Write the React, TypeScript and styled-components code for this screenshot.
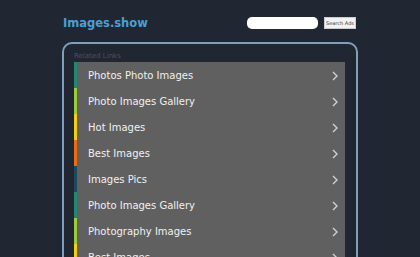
import React from "react";
import styled, { createGlobalStyle } from "styled-components";

const Global = createGlobalStyle`
  html, body {
    margin: 0;
    padding: 0;
    background: #212633;
    font-family: "DejaVu Sans", Verdana, sans-serif;
    overflow: hidden;
  }
`;

const Page = styled.div`
  width: 296px;
  margin: 0 auto;
  padding-top: 14px;
`;

const Header = styled.div`
  display: flex;
  align-items: center;
  justify-content: space-between;
  height: 18px;
  margin-bottom: 10px;
  padding: 0 2px 0 1px;
`;

const Logo = styled.div`
  color: #4b9fd2;
  font-size: 11.5px;
  font-weight: 700;
`;

const SearchForm = styled.div`
  display: flex;
  align-items: center;
  gap: 6px;
`;

const SearchInput = styled.input`
  width: 71px;
  height: 12px;
  box-sizing: border-box;
  border: none;
  border-radius: 5px;
  background: #fff;
  padding: 0 4px;
`;

const SearchButton = styled.button`
  height: 12px;
  width: 32px;
  box-sizing: border-box;
  padding: 0;
  border: 1px solid #ccc;
  background: #f2f2f2;
  color: #333;
  font-family: "DejaVu Sans", sans-serif;
  font-size: 5px;
  line-height: 10px;
`;

const Panel = styled.div`
  border: 2px solid #7f9fbd;
  border-radius: 10px;
  padding: 8px 11px 20px 10px;
  height: 260px;
`;

const PanelTitle = styled.div`
  color: #4a5262;
  font-size: 7px;
  height: 10px;
  line-height: 8px;
`;

const List = styled.ul`
  list-style: none;
  margin: 0;
  padding: 0;
  background: #606060;
`;

const Row = styled.li<{ $accent: string }>`
  display: flex;
  align-items: center;
  justify-content: space-between;
  height: 26px;
  border-left: 3px solid ${(p) => p.$accent};
  padding: 1px 7px 0 11px;
  box-sizing: border-box;
  color: #f0f0f0;
  font-size: 10px;
`;

const Chevron = () => (
  <svg width="6" height="10" viewBox="0 0 6 10">
    <path d="M1 1 L5 5 L1 9" fill="none" stroke="#d0d0d0" strokeWidth="1.4" />
  </svg>
);

const links = [
  ["Photos Photo Images", "#23876f"],
  ["Photo Images Gallery", "#9ccb3b"],
  ["Hot Images", "#f3d10b"],
  ["Best Images", "#ee6c10"],
  ["Images Pics", "#1c4a5b"],
  ["Photo Images Gallery", "#23876f"],
  ["Photography Images", "#9ccb3b"],
  ["Best Images", "#f3d10b"],
];

export default function App() {
  return (
    <>
      <Global />
      <Page>
        <Header>
          <Logo>Images.show</Logo>
          <SearchForm>
            <SearchInput />
            <SearchButton>Search Ads</SearchButton>
          </SearchForm>
        </Header>
        <Panel>
          <PanelTitle>Related Links</PanelTitle>
          <List>
            {links.map(([label, color], i) => (
              <Row key={i} $accent={color}>
                <span>{label}</span>
                <Chevron />
              </Row>
            ))}
          </List>
        </Panel>
      </Page>
    </>
  );
}
